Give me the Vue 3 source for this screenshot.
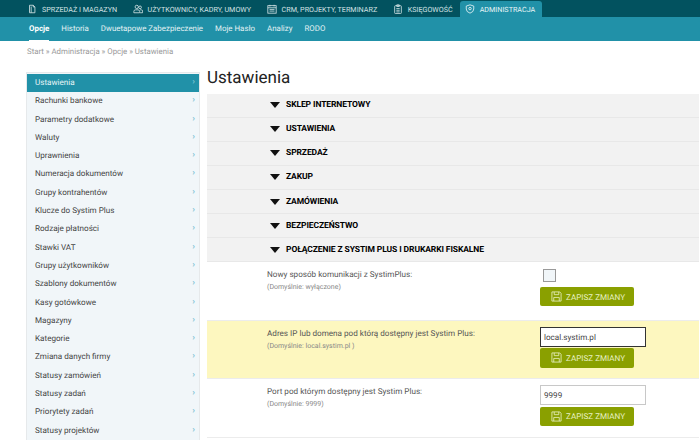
<script setup>
const tabs = [
  { label: 'SPRZEDAŻ I MAGAZYN', icon: 'doc' },
  { label: 'UŻYTKOWNICY, KADRY, UMOWY', icon: 'users' },
  { label: 'CRM, PROJEKTY, TERMINARZ', icon: 'cal' },
  { label: 'KSIĘGOWOŚĆ', icon: 'clip' },
  { label: 'ADMINISTRACJA', icon: 'shield', active: true }
]
const subs = ['Opcje', 'Historia', 'Dwuetapowe Zabezpieczenie', 'Moje Hasło', 'Analizy', 'RODO']
const menu = ['Ustawienia', 'Rachunki bankowe', 'Parametry dodatkowe', 'Waluty', 'Uprawnienia', 'Numeracja dokumentów', 'Grupy kontrahentów', 'Klucze do Systim Plus', 'Rodzaje płatności', 'Stawki VAT', 'Grupy użytkowników', 'Szablony dokumentów', 'Kasy gotówkowe', 'Magazyny', 'Kategorie', 'Zmiana danych firmy', 'Statusy zamówień', 'Statusy zadań', 'Priorytety zadań', 'Statusy projektów']
const sections = ['SKLEP INTERNETOWY', 'USTAWIENIA', 'SPRZEDAŻ', 'ZAKUP', 'ZAMÓWIENIA', 'BEZPIECZEŃSTWO', 'POŁĄCZENIE Z SYSTIM PLUS I DRUKARKI FISKALNE']
const settings = [
  { label: 'Nowy sposób komunikacji z SystimPlus:', hint: '(Domyślnie: wyłączone)', type: 'check' },
  { label: 'Adres IP lub domena pod którą dostępny jest Systim Plus:', hint: '(Domyślnie: local.systim.pl )', type: 'text', value: 'local.systim.pl', hl: true },
  { label: 'Port pod którym dostępny jest Systim Plus:', hint: '(Domyślnie: 9999)', type: 'text', value: '9999' }
]
</script>

<template>
  <div class="page">
    <nav class="top">
      <div v-for="t in tabs" :key="t.label" class="tab" :class="{ on: t.active }">
        <svg class="ti" viewBox="0 0 12 12" fill="none" stroke="currentColor" stroke-width="1">
          <template v-if="t.icon === 'doc'"><path d="M3 1.500h4.500l2 2v7H3z" /><path d="M5 3v7.500M7.500 1.500v2h2" /></template>
          <template v-else-if="t.icon === 'users'"><circle cx="4.500" cy="3.500" r="2" /><circle cx="8.500" cy="4" r="1.600" /><path d="M1 10.500V9q0-2 2-2h3q2 0 2 2v1.500zM8.500 7H10q1.500 0 1.500 1.500v2H8.500" /></template>
          <template v-else-if="t.icon === 'cal'"><rect x="1" y="2" width="10" height="9" /><path d="M1 4.500h10M3.500 1v2M8.500 1v2M3 6.500h6M3 8.500h6" /></template>
          <template v-else-if="t.icon === 'clip'"><rect x="2" y="2" width="8" height="9.500" rx="1" /><path d="M4.500 1h3v2h-3zM4 5.500h4M4 7.500h4M4 9.500h4" /></template>
          <template v-else><path d="M6 1l4.500 1.500V6q0 3.500-4.500 5Q1.500 9.500 1.500 6V2.500z" /><circle cx="6" cy="5.500" r="1.500" /></template>
        </svg>
        <span>{{ t.label }}</span>
      </div>
    </nav>
    <nav class="sub">
      <span v-for="(s, i) in subs" :key="s" class="si" :class="{ on: i === 0 }">{{ s }}</span>
    </nav>
    <div class="crumbs">Start » Administracja » Opcje » Ustawienia</div>
    <div class="body">
      <aside class="side">
        <div v-for="(m, i) in menu" :key="m" class="mi" :class="{ on: i === 0 }">
          <span>{{ m }}</span><span class="chev">›</span>
        </div>
      </aside>
      <main class="main">
        <h1>Ustawienia</h1>
        <div v-for="s in sections" :key="s" class="sec">
          <i class="tri"></i><b>{{ s }}</b>
        </div>
        <div v-for="r in settings" :key="r.label" class="row" :class="{ hl: r.hl }">
          <div class="lab">
            <div class="lt">{{ r.label }}</div>
            <div class="lh">{{ r.hint }}</div>
          </div>
          <div class="ctl">
            <div v-if="r.type === 'check'" class="chk"></div>
            <div v-else class="inp" :class="{ focus: r.hl }">{{ r.value }}</div>
            <div class="btn">
              <svg class="si2" viewBox="0 0 12 12" fill="none" stroke="currentColor" stroke-width=".9"><path d="M1 1h8.500L11 2.500V11H1z" /><path d="M3.500 1v3h5V1M3 11V7h6v4" /></svg>
              <span>ZAPISZ ZMIANY</span>
            </div>
          </div>
        </div>
      </main>
    </div>
  </div>
</template>

<style>
html, body { margin: 0; background: #fff; overflow: hidden; }
</style>

<style scoped>
.page { width: 700px; height: 440px; overflow: hidden; font-family: Roboto, sans-serif; color: #444; text-rendering: geometricPrecision; }
.top { height: 17px; background: #02525f; display: flex; padding-left: 27px; align-items: stretch; }
.tab { display: flex; align-items: center; gap: 5px; color: #d3e2e5; font-size: 7.200px; margin-right: 15.500px; white-space: nowrap; padding-top: 1px; }
.tab.on { background: #2191a8; color: #e9f5f7; margin: 1px 0 0 -8px; padding: 0 7px 0 4.500px; border-radius: 3px 3px 0 0; }
.ti { width: 10px; height: 10px; flex: none; }
.sub { height: 24px; background: #2191a8; display: flex; padding-left: 29px; gap: 12px; align-items: stretch; }
.si { color: #e3f1f4; font-size: 7.900px; line-height: 24px; height: 24px; box-sizing: border-box; }
.si.on { color: #fff; font-weight: 700; border-bottom: 1px solid #fff; }
.crumbs { font-size: 7.850px; color: #999; padding: 5px 0 0 27px; height: 26px; box-sizing: border-box; line-height: 11px; }
.body { display: flex; padding-left: 26px; align-items: flex-start; margin-top: 5px; }
.side { width: 174px; flex: none; background: #f1f6f9; border: 1px solid #e6e9eb; box-sizing: border-box; padding-top: 1px; margin-right: 7px; }
.mi { height: 18.300px; line-height: 17px; padding: 0 4px 0 8px; font-size: 8.100px; color: #444; display: flex; justify-content: space-between; }
.mi.on { background: #2191a8; color: #e9f5f7; }
.chev { color: #7cc3d3; font-weight: 700; font-size: 9px; }
.main { flex: 1; min-width: 0; margin-right: 1px; }
h1 { margin: -4px 0 0; font-size: 17px; font-weight: 400; color: #222; line-height: 20px; height: 25.500px; }
.sec { height: 24.150px; box-sizing: border-box; background: #f2f2f2; border-bottom: 1px solid #e8e8e8; display: flex; align-items: center; padding-left: 63px; font-size: 8.500px; color: #000; }
.sec b { margin-left: 6px; letter-spacing: -.1px; }
.tri { width: 0; height: 0; border: 5px solid transparent; border-top: 6px solid #111; border-bottom: 0; }
.row { display: flex; height: 58.500px; box-sizing: border-box; border-bottom: 1px solid #ececec; padding: 6px 0 0 60px; }
.row.hl { background: #fdf7bf; }
.lab { width: 273px; flex: none; }
.lt { font-size: 8.150px; color: #555; line-height: 12px; }
.lh { font-size: 7px; color: #888; line-height: 12px; margin-top: 1px; }
.ctl { display: flex; flex-direction: column; }
.chk { width: 11px; height: 11px; margin: 1px 0 3.300px 3px; border: 1px solid #999; background: #f1f6f9; }
.inp { width: 106px; height: 20px; box-sizing: border-box; border: 1px solid #c8c8c8; background: #fff; font-size: 8.100px; color: #444; line-height: 18px; padding-left: 3px; }
.inp.focus { border-color: #333; }
.btn { width: 94px; height: 19.300px; margin-top: 1.300px; border-radius: 2px; background: #8aa000; color: #e8f0c4; font-size: 8.100px; display: flex; align-items: center; padding-left: 11px; gap: 4px; box-sizing: border-box; }
.si2 { width: 11px; height: 11px; flex: none; }
</style>
